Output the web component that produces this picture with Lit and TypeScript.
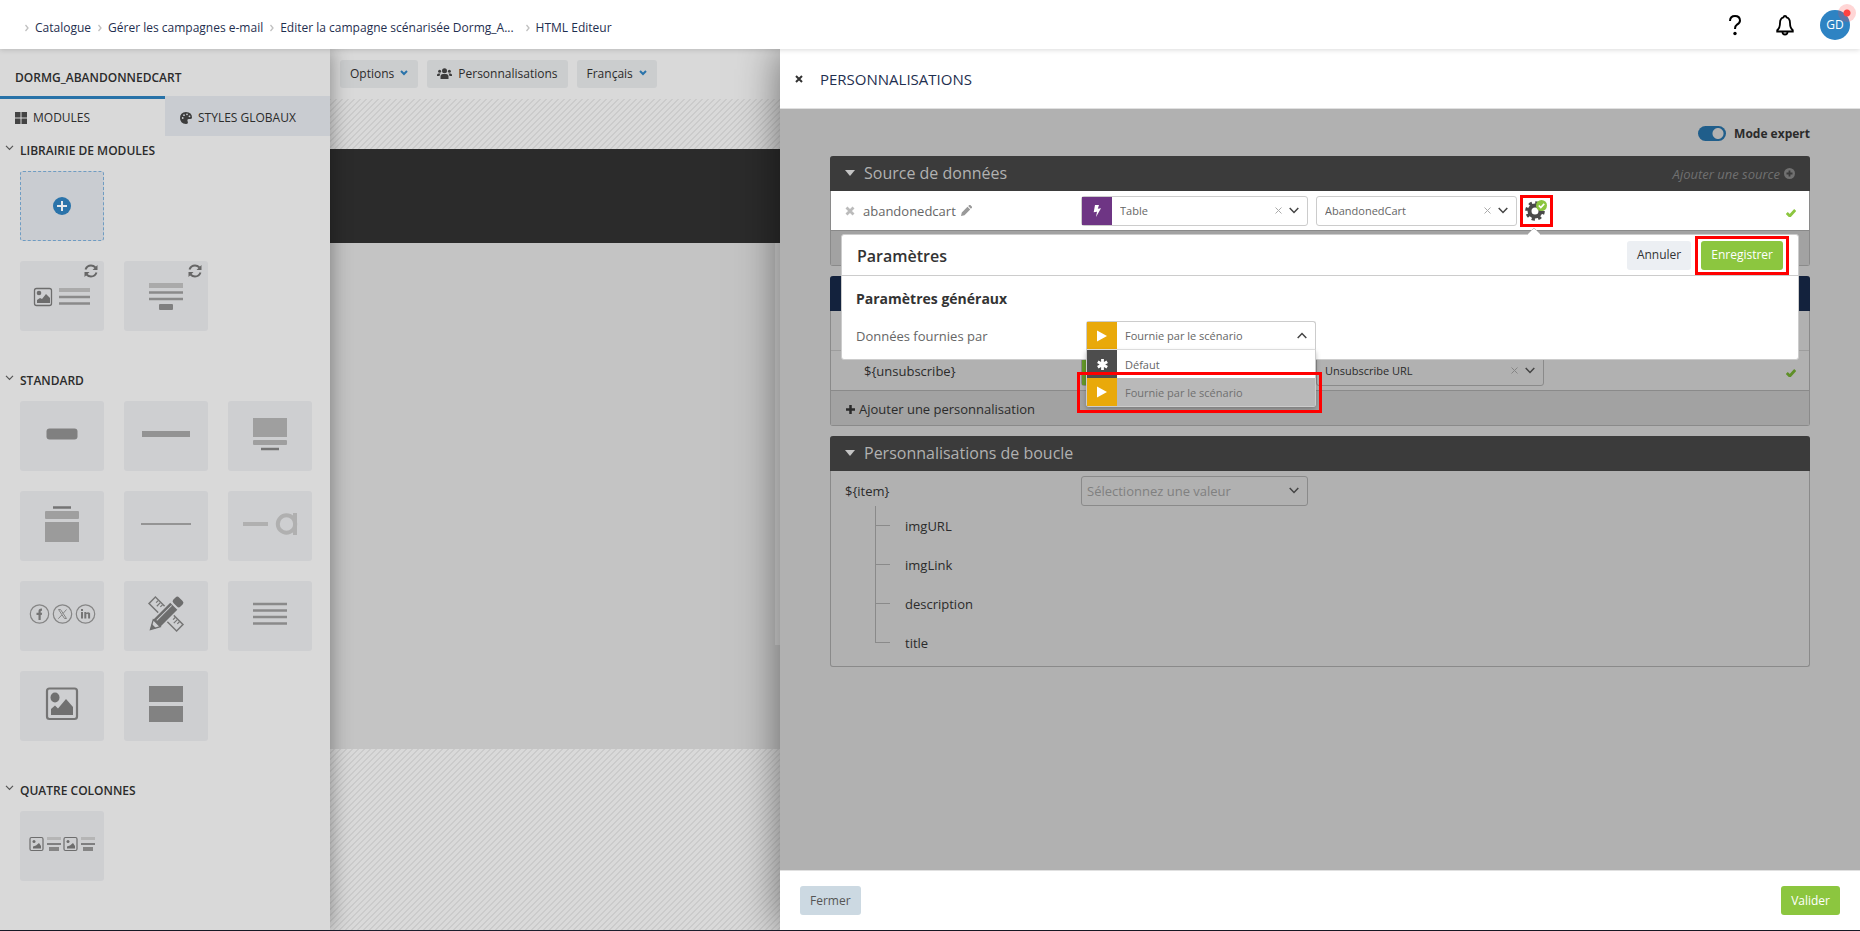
import { LitElement, html, css, svg, nothing } from "lit";
import { customElement, property } from "lit/decorators.js";

const tile: Record<string, unknown> = {
  add: svg`<circle cx="42" cy="35" r="9" fill="#2a73aa"/><path d="M42 30v10M37 35h10" stroke="#e4e8ec" stroke-width="2"/>`,
  imageText: svg`
    <rect x="14.500" y="27.500" width="17" height="17" rx="2" fill="none" stroke="#6d6d6d" stroke-width="1.300"/>
    <circle cx="19" cy="32" r="2.300" fill="#6d6d6d"/>
    <path d="M17 42v-3l3-2 2 1 4-5 4 4v5z" fill="#6d6d6d"/>
    <path d="M39 27h31v4H39z" fill="#aaa"/><path d="M39 36h31M39 42.500h31" stroke="#8a8a8a" stroke-width="2.500"/>`,
  textButton: svg`
    <path d="M25 22h34v5H25z" fill="#aaa"/><path d="M25 31.500h34M25 38h34" stroke="#8a8a8a" stroke-width="2.500"/>
    <rect x="35" y="43" width="14" height="6" rx="1" fill="#808080"/>`,
  button: svg`<rect x="26.500" y="27.500" width="31" height="11" rx="3" fill="#808080"/>`,
  bar: svg`<path d="M18 30h48v6H18z" fill="#939393"/>`,
  cardBelow: svg`
    <path d="M25 17h34v19H25z" fill="#9f9f9f"/><rect x="25" y="39" width="34" height="5" rx="1" fill="#9f9f9f"/>
    <path d="M33 48h18" stroke="#747474" stroke-width="2.500"/>`,
  cardAbove: svg`
    <path d="M33 16.500h18" stroke="#747474" stroke-width="2.500"/>
    <rect x="25" y="20" width="34" height="8" rx="1" fill="#9f9f9f"/><path d="M25 31h34v20H25z" fill="#9b9b9b"/>`,
  line: svg`<path d="M17 33h50" stroke="#949494" stroke-width="2"/>`,
  lineLogo: svg`
    <path d="M15 31h25v4H15z" fill="#b0b0b0"/>
    <circle cx="58.500" cy="33" r="8.700" fill="none" stroke="#b0b0b0" stroke-width="4"/>
    <path d="M65 22h4v22h-4z" fill="#b0b0b0"/>`,
  social: svg`
    <g fill="none" stroke="#858585" stroke-width="1.200"><circle cx="19.500" cy="33" r="9.200"/><circle cx="42.500" cy="33" r="9.200"/><circle cx="65.500" cy="33" r="9.200"/></g>
    <path d="M18.500 39v-5h-2v-2.200h2v-1.500q0-3 3.500-2.800v2.200q-1.500-.1-1.300.9v1.200h1.400l-.3 2.200h-1.100v5z" fill="#757575"/>
    <path d="M38.500 28.500h2l6 9h-2zM46.500 28.500l-3.500 4M41.800 34l-3.500 3.700" fill="none" stroke="#858585" stroke-width="1"/>
    <path d="M61 31h2v6.500h-2zM61 28h2v2h-2zM64.300 31h2v1q2-1.800 3.800.3v5.200h-2v-4.200q-1-1.200-1.800 0v4.200h-2z" fill="#757575"/>`,
  design: svg`
    <g transform="translate(42 33) rotate(45)"><rect x="-19.500" y="-4.500" width="39" height="9" fill="none" stroke="#777" stroke-width="1.500"/>
      <path d="M-15-4v3M-12-4v5M-9-4v3M9-4v3M12-4v5M15-4v3" stroke="#777" stroke-width="1.200"/></g>
    <g transform="translate(42 33) rotate(-45)"><path d="M-15-6.500H21v13H-15L-24 0z" fill="#cecfd1"/>
      <path d="M-13-5H11V5H-13z" fill="#6d6d6d"/><path d="M-11-2H10" stroke="#cecfd1"/>
      <rect x="13" y="-5" width="8" height="10" rx="2.500" fill="#6d6d6d"/>
      <path d="M-13-5-22 0-13 5z" fill="none" stroke="#6d6d6d" stroke-width="1.300"/><path d="M-22 0l5-3v6z" fill="#6d6d6d"/></g>`,
  text: svg`<path d="M25 23h34M25 29.500h34M25 36h34M25 42.500h34" stroke="#8a8a8a" stroke-width="2.500"/>`,
  image: svg`
    <rect x="27" y="17.500" width="30" height="30.500" rx="2.500" fill="none" stroke="#757575" stroke-width="2.200"/>
    <ellipse cx="35" cy="26.500" rx="4.500" ry="5" fill="#707070"/><path d="M31 44v-6l4-3.500 3 3 8-9.500 7 8v8z" fill="#707070"/>`,
  blocks: svg`<path d="M25 15h34v16H25zM25 35h34v16H25z" fill="#828282"/>`,
  fourColumns: svg`${[0, 34].map(
    (x) => svg`<g transform="translate(${x} 0)">
      <rect x="10" y="26.500" width="13" height="13" rx="1.500" fill="none" stroke="#6d6d6d" stroke-width="1.200"/>
      <circle cx="14" cy="30.500" r="1.500" fill="#6d6d6d"/><path d="M13 37.500v-2l3-1 3-2.500 2 3v2.500z" fill="#6d6d6d"/>
      <path d="M27 26h14v3H27z" fill="#b5b5b5"/><path d="M27 33h14" stroke="#777" stroke-width="1.800"/><path d="M29 36h10v4H29z" fill="#858585"/></g>`
  )}`,
};

interface Module {
  icon: string;
  label: string;
  synced?: boolean;
  dashed?: boolean;
}

const library: { title: string; modules: Module[] }[] = [
  {
    title: "LIBRAIRIE DE MODULES",
    modules: [
      { icon: "add", label: "Ajouter", dashed: true },
      { icon: "imageText", label: "Image et texte", synced: true },
      { icon: "textButton", label: "Texte et bouton", synced: true },
    ],
  },
  {
    title: "STANDARD",
    modules: [
      { icon: "button", label: "Bouton" },
      { icon: "bar", label: "Barre" },
      { icon: "cardBelow", label: "Image et titre" },
      { icon: "cardAbove", label: "Titre et image" },
      { icon: "line", label: "Ligne" },
      { icon: "lineLogo", label: "Logo" },
      { icon: "social", label: "Réseaux sociaux" },
      { icon: "design", label: "Conception" },
      { icon: "text", label: "Texte" },
      { icon: "image", label: "Image" },
      { icon: "blocks", label: "Blocs" },
    ],
  },
  { title: "QUATRE COLONNES", modules: [{ icon: "fourColumns", label: "Quatre colonnes" }] },
];

const reset = css`
  *,
  *::before,
  *::after {
    box-sizing: border-box;
  }
  button,
  select {
    font: inherit;
    color: inherit;
    border: 0;
    margin: 0;
    padding: 0;
    background: none;
    appearance: none;
    cursor: pointer;
  }
  a {
    color: inherit;
    text-decoration: none;
  }
  svg {
    display: block;
    flex: none;
  }
  h1,
  h2,
  h3,
  ul,
  ol {
    margin: 0;
    padding: 0;
    list-style: none;
    font-weight: 400;
  }
`;

@customElement("top-bar")
export class TopBar extends LitElement {
  static styles = [
    reset,
    css`
      :host {
        display: flex;
        align-items: center;
        justify-content: space-between;
        height: 49px;
        padding: 0 10px 0 25px;
        background: #fff;
        color: #1f2f50;
        font-size: 12px;
        position: relative;
        z-index: 3;
        box-shadow: 0 1px 5px rgba(0, 0, 0, 0.15);
      }
      .crumbs {
        display: flex;
        gap: 7px;
        padding-top: 6px;
      }
      .crumbs li {
        display: flex;
        align-items: center;
        gap: 6px;
        white-space: nowrap;
      }
      .crumbs .current {
        padding-left: 5px;
        font-weight: 500;
      }
      .tools {
        display: flex;
        align-items: center;
        gap: 20px;
      }
      .tools button {
        display: flex;
        align-items: center;
        justify-content: center;
        width: 30px;
        height: 30px;
      }
      .tools .avatar {
        position: relative;
        border-radius: 50%;
        background: #2e83c3;
        color: #fff;
      }
      .dot {
        position: absolute;
        right: -6px;
        top: -6px;
        width: 18px;
        height: 18px;
        border-radius: 50%;
        background: radial-gradient(circle, #ff4242 3px, rgba(255, 66, 66, 0.22) 4px);
      }
    `,
  ];
  render() {
    const sep = html`<svg width="4" height="8" viewBox="0 0 4 8"><path d="M.5 1l2.500 3-2.500 3" fill="none" stroke="#c0c0c0" stroke-width="1.300"/></svg>`;
    return html`
      <nav aria-label="Fil d'Ariane">
        <ol class="crumbs">
          <li>${sep}<a href="#">Catalogue</a></li>
          <li>${sep}<a href="#">Gérer les campagnes e-mail</a></li>
          <li>${sep}<a href="#">Editer la campagne scénarisée Dormg_A...</a></li>
          <li class="current">${sep}<span>HTML Editeur</span></li>
        </ol>
      </nav>
      <div class="tools">
        <button aria-label="Aide">
          <svg width="24" height="24" viewBox="0 0 24 24"><path d="M7 8q.2-5 5-5t5 4.500q0 2.500-3 4.200-2 1.300-2 4.300" fill="none" stroke="#000" stroke-width="2"/><circle cx="12" cy="20.500" r="1.700"/></svg>
        </button>
        <button aria-label="Notifications">
          <svg width="24" height="24" viewBox="0 0 24 24"><path d="M12 2.800q1.300 0 1.500 1.600 3.500 1 3.500 5.600 0 5 2.800 7.200v1.300H4.200v-1.300Q7 15 7 10q0-4.600 3.500-5.600.2-1.600 1.500-1.600z" fill="none" stroke="#000" stroke-width="1.800"/><path d="M9.500 19q0 2.500 2.500 2.500t2.500-2.500" fill="none" stroke="#000" stroke-width="1.800"/></svg>
        </button>
        <button class="avatar">GD<span class="dot"></span></button>
      </div>
    `;
  }
}

@customElement("module-library")
export class ModuleLibrary extends LitElement {
  static styles = [
    reset,
    css`
      :host {
        display: block;
        background: #d9d9d9;
        color: #2b2b2b;
        font-size: 12px;
        position: relative;
        z-index: 1;
        box-shadow: 0 0 20px rgba(0, 0, 0, 0.4);
      }
      .name {
        padding: 20px 15px 0;
        height: 47px;
        font-size: 12px;
        line-height: 18px;
        font-weight: 600;
      }
      .tabs {
        display: flex;
      }
      .tab {
        flex: 1;
        display: flex;
        align-items: center;
        gap: 6px;
        height: 40px;
        padding: 0 15px;
        border-top: 3px solid #c9ccd1;
        background: #c9ccd1;
      }
      .tab[aria-selected="true"] {
        border-color: #2872a8;
        background: none;
      }
      .group {
        padding-bottom: 35px;
      }
      .title {
        display: flex;
        align-items: center;
        gap: 5px;
        height: 20px;
        margin: 4px 7px 11px 5px;
        font-size: 12px;
        font-weight: 600;
      }
      .title svg {
        margin-bottom: 4px;
      }
      .tiles {
        display: grid;
        grid-template-columns: repeat(3, 84px);
        gap: 20px;
        padding-left: 20px;
      }
      .tile {
        position: relative;
        height: 70px;
        border-radius: 3px;
        background: #cecfd1;
      }
      .tile.dashed {
        grid-column: 1 / -1;
        width: 84px;
        background: #c9ccd1;
        outline: 1px dashed #6f9cc2;
        outline-offset: -1px;
      }
      .sync {
        position: absolute;
        right: 6px;
        top: 3px;
      }
    `,
  ];
  render() {
    return html`
      <h1 class="name">DORMG_ABANDONNEDCART</h1>
      <div class="tabs" role="tablist">
        <button class="tab" role="tab" aria-selected="true">
          <svg width="12" height="12" viewBox="0 0 12 12" fill="#444"><path d="M0 0h5.500v5.500H0zM6.500 0H12v5.500H6.500zM0 6.500h5.500V12H0zM6.500 6.500H12V12H6.500z"/></svg>
          MODULES
        </button>
        <button class="tab" role="tab" aria-selected="false">
          <svg width="12" height="12" viewBox="0 0 12 12"><path d="M6 0q6 .3 6 5.500Q12 7 10 7H8.500q-1.800.3-1 2 1.300 3-1.500 3-6-.5-6-6t6-6z" fill="#3c3c3c"/><g fill="#c9ccd1"><circle cx="2.700" cy="6" r=".9"/><circle cx="4" cy="3.200" r=".9"/><circle cx="7" cy="2.300" r=".9"/><circle cx="9.500" cy="4.300" r=".9"/></g></svg>
          STYLES GLOBAUX
        </button>
      </div>
      ${library.map(
        (group) => html`
          <section class="group">
            <h2 class="title">
              <svg width="10" height="6" viewBox="0 0 10 6"><path d="M1 .8l3.500 3.500L8 .8" fill="none" stroke="#555" stroke-width="1.200"/></svg>
              ${group.title}
            </h2>
            <div class="tiles">
              ${group.modules.map(
                (m) => html`<button class="tile ${m.dashed ? "dashed" : ""}" aria-label=${m.label}>
                  <svg width="84" height="70" viewBox="0 0 84 70">${tile[m.icon]}</svg>
                  ${m.synced
                    ? html`<svg class="sync" width="14" height="14" viewBox="0 0 14 14"><path d="M1.500 5.500Q3 1.500 7 1.500q2.500 0 4.500 2M12.500 8.500q-1.500 4-5.500 4-2.500 0-4.500-2" fill="none" stroke="#666" stroke-width="2"/><path d="M13.500 1v5H8.500zM.5 13V8h5z" fill="#666"/></svg>`
                    : nothing}
                </button>`
              )}
            </div>
          </section>
        `
      )}
    `;
  }
}

@customElement("mail-canvas")
export class MailCanvas extends LitElement {
  static styles = [
    reset,
    css`
      :host {
        display: flex;
        flex-direction: column;
        min-width: 0;
        color: #2b2b2b;
        font-size: 12px;
        background: #d9d9d9;
      }
      .toolbar {
        display: flex;
        gap: 9px;
        height: 50px;
        padding: 11px 10px;
      }
      .toolbar button {
        display: flex;
        align-items: center;
        gap: 6px;
        height: 28px;
        padding: 0 10px 2px;
        border-radius: 3px;
        background: #cbcdce;
      }
      .page {
        flex: 1;
        display: flex;
        flex-direction: column;
        padding: 50px 0 181px;
        background: linear-gradient(135deg, #cbcbcb 0 10%, #d9d9d9 10% 50%, #cbcbcb 50% 60%, #d9d9d9 60%) 0 0 / 6px 6px;
      }
      .hero {
        height: 94px;
        background: #2b2b2b;
      }
      .content {
        flex: 1;
        display: flex;
        justify-content: flex-end;
        background: #c4c4c4;
      }
      .thumb {
        width: 5px;
        height: 402px;
        background: #d6d6d6;
      }
    `,
  ];
  render() {
    const chev = html`<svg width="8" height="6" viewBox="0 0 8 6"><path d="M1 1l3 3 3-3" fill="none" stroke="#2a73aa" stroke-width="2"/></svg>`;
    return html`
      <div class="toolbar">
        <button>Options ${chev}</button>
        <button>
          <svg width="15" height="11" viewBox="0 0 15 11" fill="#3c3c3c"><circle cx="7.500" cy="2.700" r="2.500"/><circle cx="2.600" cy="3.300" r="1.500"/><circle cx="12.400" cy="3.300" r="1.500"/><path d="M3.500 11V8.500Q3.500 6 6 6h3q2.500 0 2.500 2.500V11zM0 8V7q0-1.500 1.500-1.500h2Q2.700 6.500 2.500 8zM15 8V7q0-1.500-1.500-1.500h-2q.8 1 1 2.500z"/></svg>
          Personnalisations
        </button>
        <button>Français ${chev}</button>
      </div>
      <div class="page">
        <div class="hero"></div>
        <div class="content"><div class="thumb"></div></div>
      </div>
    `;
  }
}

@customElement("pick-field")
export class PickField extends LitElement {
  @property() value = "";
  @property() label = "";
  @property() tone = "";
  @property({ type: Boolean }) clearable = false;
  @property({ type: Boolean }) empty = false;
  @property({ type: Boolean }) open = false;

  static styles = [
    reset,
    css`
      :host {
        display: block;
      }
      .box {
        position: relative;
        display: flex;
        height: 30px;
        border: 1px solid var(--line, #ccc);
        border-radius: 3px;
        font-size: 11px;
      }
      .badge {
        display: flex;
        align-items: center;
        justify-content: center;
        width: 30px;
        background: #6e3584;
      }
      .badge.play {
        background: #e9a90a;
      }
      .badge.green {
        background: #659a29;
      }
      select {
        flex: 1;
        min-width: 0;
        padding: 0 8px;
        outline: 0;
      }
      .empty select {
        padding-left: 5px;
        color: #808080;
        font-size: 13px;
      }
      .marks {
        position: absolute;
        right: 8px;
        top: 0;
        bottom: 0;
        display: flex;
        align-items: center;
        gap: 7px;
        pointer-events: none;
      }
      .clear {
        stroke: var(--clear, #aaa);
      }
      .open {
        height: 29px;
        border-bottom-color: #e5e5e5;
        border-radius: 3px 3px 0 0;
      }
    `,
  ];
  render() {
    return html`
      <div class="box ${this.empty ? "empty" : ""} ${this.open ? "open" : ""}">
        ${this.tone
          ? html`<span class="badge ${this.tone}">
              ${this.tone === "play"
                ? html`<svg width="10" height="12" viewBox="0 0 10 12"><path d="M0 .5l10 5.500-10 5.500z" fill="#fff"/></svg>`
                : html`<svg width="8" height="12" viewBox="0 0 8 12"><path d="M2 0h4L4.800 3.700 8 3.200 3 12l1-5.300-3.300.5z" fill="#fff"/></svg>`}
            </span>`
          : nothing}
        <select aria-label=${this.label}>
          <option>${this.value}</option>
        </select>
        <span class="marks">
          ${this.clearable
            ? html`<svg class="clear" width="7" height="7" viewBox="0 0 7 7"><path d="M.5.5l6 6M6.500.5l-6 6"/></svg>`
            : nothing}
          <svg width="10" height="7" viewBox="0 0 10 7"><path d=${this.open ? "M.7 6L5 1.500 9.300 6" : "M.7 1L5 5.500 9.300 1"} fill="none" stroke="#444" stroke-width="1.500"/></svg>
        </span>
      </div>
    `;
  }
}

@customElement("settings-popover")
export class SettingsPopover extends LitElement {
  static styles = [
    reset,
    css`
      :host {
        display: block;
        background: #fff;
        border: 1px solid #ccc;
        border-radius: 3px;
        color: #666;
        font-size: 13px;
        --line: #ccc;
      }
      .arrow {
        position: absolute;
        top: -8px;
        right: 257px;
      }
      .head {
        display: flex;
        align-items: center;
        gap: 4px;
        height: 41px;
        padding: 0 9px 0 15px;
        border-bottom: 1px solid #ccc;
      }
      .head h2 {
        flex: 1;
        padding-top: 2px;
        color: #333;
        font-size: 16px;
        font-weight: 600;
      }
      .head button {
        height: 29px;
        padding: 0 10px 2px;
        border-radius: 3px;
        font-size: 12px;
      }
      .cancel {
        background: #eceff3;
        color: #333;
      }
      .head .save {
        background: #8cc63f;
        color: #fff;
      }
      .ring {
        padding: 2px 3px;
        border: 3px solid #f00;
      }
      .body {
        padding: 11px 14px 9px;
      }
      h3 {
        height: 24px;
        line-height: 24px;
        color: #333;
        font-size: 14px;
        font-weight: 700;
      }
      .field {
        display: grid;
        grid-template-columns: 230px 230px;
        align-items: center;
        margin-top: 10px;
      }
      .drop {
        position: relative;
      }
      .menu {
        position: absolute;
        z-index: 1;
        top: 29px;
        left: 0;
        right: 0;
        border: 1px solid #ccc;
        border-top: 0;
        border-radius: 0 0 3px 3px;
        background: #fff;
        font-size: 11px;
        box-shadow: 0 2px 5px rgba(0, 0, 0, 0.25);
      }
      .menu li {
        display: flex;
        align-items: center;
        gap: 8px;
        height: 28px;
      }
      .menu li.chosen {
        background: #b9b9b9;
        color: #707070;
      }
      .badge {
        display: flex;
        align-items: center;
        justify-content: center;
        width: 30px;
        height: 28px;
        background: #4d4d4d;
      }
      .chosen .badge {
        background: #e9a90a;
      }
      .mark {
        position: absolute;
        z-index: 2;
        top: 51px;
        left: -9px;
        right: -6px;
        height: 41px;
        border: 3px solid #f00;
      }
    `,
  ];
  render() {
    return html`
      <svg class="arrow" width="14" height="9" viewBox="0 0 14 9"><path d="M0 8l7-7 7 7v1H0z" fill="#fff"/><path d="M0 8l7-7 7 7" fill="none" stroke="#ccc"/></svg>
      <div class="head">
        <h2>Paramètres</h2>
        <button class="cancel">Annuler</button>
        <div class="ring"><button class="save">Enregistrer</button></div>
      </div>
      <div class="body">
        <h3>Paramètres généraux</h3>
        <div class="field">
          <span>Données fournies par</span>
          <div class="drop">
            <pick-field open tone="play" value="Fournie par le scénario" label="Données fournies par"></pick-field>
            <ul class="menu" role="listbox">
              <li role="option" aria-selected="false">
                <span class="badge"><svg width="11" height="11" viewBox="0 0 11 11"><path d="M5.500 0v11M.8 2.700l9.400 5.600M10.200 2.700L.8 8.300" stroke="#fff" stroke-width="2.800"/></svg></span>Défaut
              </li>
              <li role="option" aria-selected="true" class="chosen">
                <span class="badge"><svg width="10" height="12" viewBox="0 0 10 12"><path d="M0 .5l10 5.500-10 5.500z" fill="#fff"/></svg></span>Fournie par le scénario
              </li>
            </ul>
            <span class="mark"></span>
          </div>
        </div>
      </div>
    `;
  }
}

@customElement("perso-panel")
export class PersoPanel extends LitElement {
  static styles = [
    reset,
    css`
      :host {
        display: flex;
        flex-direction: column;
        min-width: 0;
        background: #b1b1b1;
        color: #2b2b2b;
        font-size: 13px;
        position: relative;
        z-index: 2;
        box-shadow: 0 0 40px rgba(0, 0, 0, 0.5);
      }
      .head {
        display: flex;
        align-items: center;
        gap: 17px;
        height: 60px;
        padding: 0 15px;
        background: #fff;
        border-bottom: 1px solid #e0e0e0;
      }
      .head h1 {
        color: #1f2f50;
        font-size: 15px;
      }
      .body {
        flex: 1;
        display: flex;
        flex-direction: column;
        gap: 10px;
        padding: 15px 50px;
      }
      .expert {
        align-self: flex-end;
        display: flex;
        align-items: center;
        gap: 8px;
        height: 18px;
        margin-bottom: 4px;
        font-size: 12px;
        font-weight: 700;
      }
      .expert input {
        appearance: none;
        width: 28px;
        height: 15px;
        margin: 0;
        border-radius: 8px;
        background: radial-gradient(circle at 20px 50%, #b1b1b1 5px, transparent 6px) #205e8b;
      }
      .card {
        border: 1px solid #8a8a8a;
        border-top: 0;
        border-radius: 3px;
      }
      .bar {
        display: flex;
        align-items: center;
        gap: 9px;
        height: 35px;
        margin: 0 -1px;
        padding: 0 15px 2px;
        border-radius: 3px 3px 0 0;
        background: #3b3b3b;
        color: #b1b1b1;
      }
      .bar h2 {
        flex: 1;
        font-size: 16px;
      }
      .bar button {
        display: flex;
        align-items: center;
        gap: 4px;
        padding-top: 2px;
        color: #707070;
        font-style: italic;
      }
      .bar.navy {
        background: #13223d;
      }
      .row {
        position: relative;
        display: grid;
        grid-template-columns: 228px 227px auto 1fr 12px;
        column-gap: 8px;
        align-items: center;
        height: 39px;
        padding: 0 11px 0 14px;
        --line: #8a8a8a;
        --clear: #858585;
      }
      .row.lit {
        background: #fff;
        color: #666;
        --line: #ccc;
        --clear: #aaa;
      }
      .row.sub {
        height: 40px;
        border-top: 1px solid #9d9d9d;
      }
      .key {
        display: flex;
        align-items: center;
        gap: 8px;
      }
      .indent {
        padding-left: 19px;
      }
      .key .pencil {
        margin-left: -3px;
      }
      .narrow {
        width: 201px;
      }
      .wide {
        width: 228px;
      }
      .end {
        display: flex;
        align-items: center;
        gap: 3px;
      }
      .gear {
        display: block;
        padding: 2px 2px 3px;
        border: 3px solid #f00;
      }
      .tick {
        grid-column: 5;
        padding-top: 4px;
      }
      .foot {
        display: flex;
        align-items: center;
        height: 35px;
        padding: 2px 15px 0;
        border-top: 1px solid #8a8a8a;
        background: #a2a2a2;
      }
      .foot button {
        display: flex;
        align-items: center;
        gap: 4px;
      }
      settings-popover {
        position: absolute;
        z-index: 2;
        top: 43px;
        left: 10px;
        right: 10px;
      }
      .tree {
        margin-top: -4px;
        padding: 0 0 4px 44px;
      }
      .tree li {
        display: flex;
        align-items: center;
        gap: 15px;
        height: 39px;
      }
      .tree li::before {
        content: "";
        width: 15px;
        height: 39px;
        border-left: 1px solid #8a8a8a;
        background: linear-gradient(#8a8a8a, #8a8a8a) 0 19px / 15px 1px no-repeat;
      }
      .tree li:last-child::before {
        height: 20px;
        margin-bottom: 19px;
      }
      .actions {
        display: flex;
        justify-content: space-between;
        height: 60px;
        padding: 15px 20px;
        background: #fff;
        border-top: 1px solid #e0e0e0;
        font-size: 12px;
      }
      .actions button {
        height: 29px;
        padding: 0 10px;
        border-radius: 3px;
      }
      .close {
        background: #ccd9e2;
        color: #555;
      }
      .actions .ok {
        background: #8cc63f;
        color: #fff;
        font-weight: 500;
      }
    `,
  ];
  render() {
    const caret = html`<svg width="10" height="6" viewBox="0 0 10 6"><path d="M0 0h10L5 6z" fill="#c4c4c4"/></svg>`;
    const tick = (color: string) =>
      html`<svg class="tick" width="10" height="12" viewBox="0 0 10 8"><path d="M.8 4l3 3 5.400-6" fill="none" stroke=${color} stroke-width="2.800"/></svg>`;
    return html`
      <header class="head">
        <button aria-label="Fermer le panneau">
          <svg width="8" height="8" viewBox="0 0 8 8"><path d="M1 1l6 6M7 1L1 7" stroke="#333" stroke-width="2"/></svg>
        </button>
        <h1>PERSONNALISATIONS</h1>
      </header>
      <div class="body">
        <label class="expert"><input type="checkbox" role="switch" checked />Mode expert</label>
        <section class="card">
          <div class="bar">
            ${caret}
            <h2>Source de données</h2>
            <button>
              Ajouter une source
              <svg width="11" height="11" viewBox="0 0 11 11"><circle cx="5.500" cy="5.500" r="5.500" fill="#707070"/><path d="M5.500 2.500v6M2.500 5.500h6" stroke="#3b3b3b" stroke-width="1.800"/></svg>
            </button>
          </div>
          <div class="row lit">
            <span class="key">
              <svg width="10" height="10" viewBox="0 0 10 10"><path d="M1.500 1.500l7 7M8.500 1.500l-7 7" stroke="#bbb" stroke-width="2.800"/></svg>
              abandonedcart
              <svg class="pencil" width="11" height="11" viewBox="0 0 11 11"><path d="M0 11l.8-3.500L6.500 1.800l2.700 2.700L3.500 10.200zM7.200 1.100L8.300 0q.5-.3 1 0L11 1.700q.3.500 0 1L9.900 3.800z" fill="#999"/></svg>
            </span>
            <pick-field tone="purple" value="Table" label="Type de source" clearable></pick-field>
            <div class="end">
              <pick-field class="narrow" value="AbandonedCart" label="Table source" clearable></pick-field>
              <button class="gear" aria-label="Paramètres de la source">
                <svg width="23" height="21" viewBox="0 0 23 21">
                  <circle cx="10" cy="11" r="5.500" fill="none" stroke="#4a4a4a" stroke-width="4"/>
                  <circle cx="10" cy="11" r="8.300" fill="none" stroke="#4a4a4a" stroke-width="3" stroke-dasharray="3.260 3.260"/>
                  <circle cx="16.500" cy="5.500" r="5.500" fill="#8cc63f"/><path d="M13.800 5.500l2 2 3.400-3.600" fill="none" stroke="#fff" stroke-width="1.700"/>
                </svg>
              </button>
            </div>
            ${tick("#8cc63f")}
            <settings-popover></settings-popover>
          </div>
          <div class="foot"></div>
        </section>
        <section class="card">
          <div class="bar navy"></div>
          <div class="row"></div>
          <div class="row sub">
            <span class="key indent">\${unsubscribe}</span>
            <pick-field tone="green" value="" label="Type de valeur"></pick-field>
            <pick-field class="wide" value="Unsubscribe URL" label="Valeur" clearable></pick-field>
            ${tick("#5f8f28")}
          </div>
          <div class="foot">
            <button>
              <svg width="9" height="9" viewBox="0 0 9 9"><path d="M4.500 0v9M0 4.500h9" stroke="#2b2b2b" stroke-width="2.500"/></svg>
              Ajouter une personnalisation
            </button>
          </div>
        </section>
        <section class="card">
          <div class="bar">
            ${caret}
            <h2>Personnalisations de boucle</h2>
          </div>
          <div class="row">
            <span class="key">\${item}</span>
            <pick-field empty value="Sélectionnez une valeur" label="Valeur de item"></pick-field>
          </div>
          <ul class="tree">
            <li>imgURL</li>
            <li>imgLink</li>
            <li>description</li>
            <li>title</li>
          </ul>
        </section>
      </div>
      <footer class="actions">
        <button class="close">Fermer</button>
        <button class="ok">Valider</button>
      </footer>
    `;
  }
}

@customElement("app-root")
export class AppRoot extends LitElement {
  static styles = css`
    :host {
      display: flex;
      flex-direction: column;
      min-height: 100vh;
      box-sizing: border-box;
      border-bottom: 1px solid #1c1f2e;
      font-family: "Open Sans", "Noto Sans", sans-serif;
      background: #d9d9d9;
    }
    .work {
      flex: 1;
      display: grid;
      grid-template-columns: 330px 5fr 12fr;
    }
  `;
  render() {
    return html`
      <top-bar></top-bar>
      <main class="work">
        <module-library></module-library>
        <mail-canvas></mail-canvas>
        <perso-panel></perso-panel>
      </main>
    `;
  }
}
